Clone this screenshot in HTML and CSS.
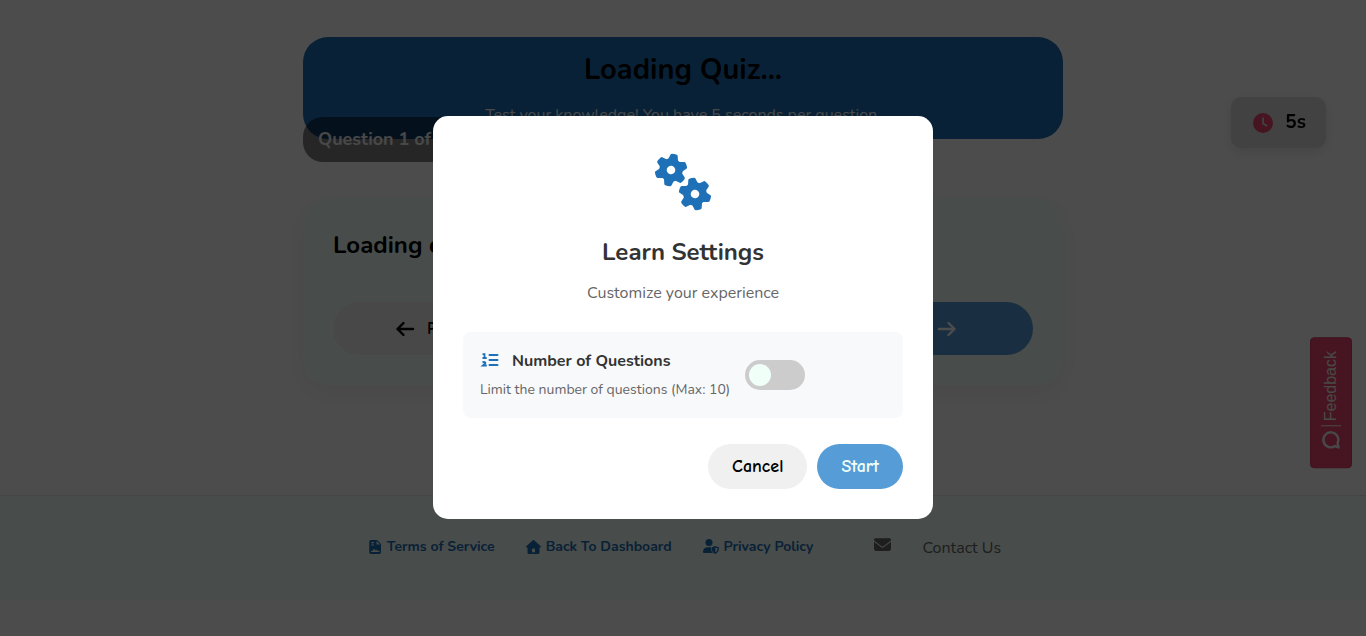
FILE: index.html
```html
<!DOCTYPE html>
<html lang="en">
<head>
    <meta charset="UTF-8">
    <meta name="viewport" content="width=device-width, initial-scale=1.0">
    <title>Quiz</title>
    <link rel="stylesheet" href="styles.css">
</head>
<body>
    <main class="quiz-container">
        <header class="quiz-header">
            <h1>Loading Quiz...</h1>
            <p>Test your knowledge! You have 5 seconds per question.</p>
            <div class="question-count">Question 1 of 10</div>
        </header>

        <section class="quiz-card">
            <h2>Loading question...</h2>
            <div class="quiz-nav">
                <button type="button" class="nav-button">
                    <svg width="20" height="18" viewBox="0 0 20 18" fill="none" stroke="currentColor" stroke-width="2.4" stroke-linecap="round" stroke-linejoin="round"><path d="M18 9H2.5M8.500 3l-6 6 6 6"/></svg>
                    Previous
                </button>
                <button type="button" class="nav-button next-button">
                    Next
                    <svg width="20" height="18" viewBox="0 0 20 18" fill="none" stroke="currentColor" stroke-width="2.4" stroke-linecap="round" stroke-linejoin="round"><path d="M2 9h15.500M11.500 3l6 6-6 6"/></svg>
                </button>
            </div>
        </section>
    </main>

    <div class="timer">
        <svg width="20" height="20" viewBox="0 0 20 20"><circle cx="10" cy="10" r="10" fill="#ef476f"/><path d="M10 5v5.500l3.500 2.300" fill="none" stroke="#dcdcdc" stroke-width="1.700" stroke-linecap="round" stroke-linejoin="round"/></svg>
        <span>5s</span>
    </div>

    <button type="button" class="feedback-button">
        <svg width="20" height="20" viewBox="0 0 20 20" fill="none" stroke="currentColor" stroke-width="2.4"><path d="M14 15.800A7.500 7.500 0 1 1 16.600 12.800L17.500 17.200z" stroke-linejoin="round"/></svg>
        <span>Feedback</span>
    </button>

    <!-- Footer -->
    <footer class="footer">
        <a href="#" class="footer-link">
            <svg width="13" height="14" viewBox="0 0 13 14"><path fill-rule="evenodd" fill="currentColor" d="M2 0h6l4 4v8.200A1.800 1.800 0 0 1 10.200 14H2a1.800 1.800 0 0 1-1.800-1.800V1.800A1.800 1.800 0 0 1 2 0zM2.200 2v1.200H5V2zM2.200 4.400v1.200H5V4.400zM7.500 1v3.500H11zM2 12h8.500v-1.200H8.200L7.500 9.600l-1 1L5 8.500 3.500 11H2z"/></svg>
            Terms of Service
        </a>
        <a href="#" class="footer-link">
            <svg width="15" height="14" viewBox="0 0 15 14"><path fill-rule="evenodd" fill="currentColor" d="M6.900.200a1 1 0 0 1 1.200 0l6.600 6c.600.600.300 1.400-.5 1.400h-.7v4.900c0 .9-.6 1.500-1.500 1.500H3c-.9 0-1.500-.6-1.500-1.500V7.600H.8C0 7.600-.3 6.800.3 6.200zM6 12.200h3V9.500a1 1 0 0 0-1-1H7a1 1 0 0 0-1 1z"/></svg>
            Back To Dashboard
        </a>
        <a href="#" class="footer-link">
            <svg width="16" height="15" viewBox="0 0 16 15" fill="currentColor"><circle cx="6" cy="3.500" r="3.500"/><path d="M0 13c0-3 2-4.800 4.800-4.800h2.400l.8.100c0 2.300.2 4.100 2 5.700H1a1 1 0 0 1-1-1z"/><path fill-rule="evenodd" d="M12.300 7l3.700 1.400c0 3-1 5.500-3.700 6.600-2.700-1.100-3.700-3.600-3.700-6.600zM12.300 8.500v5c1.500-.8 2.300-2.300 2.400-4.200z"/></svg>
            Privacy Policy
        </a>
        <a href="#" class="contact-link">
            <svg width="17" height="17" viewBox="0 0 512 512"><path fill="currentColor" d="M48 64C21.500 64 0 85.500 0 112c0 15.100 7.100 29.300 19.200 38.400L236.800 313.600c11.400 8.500 27 8.500 38.400 0L492.800 150.400c12.100-9.100 19.200-23.300 19.200-38.400c0-26.500-21.500-48-48-48L48 64zM0 176L0 384c0 35.300 28.700 64 64 64l384 0c35.300 0 64-28.700 64-64l0-208L294.400 339.200c-22.800 17.100-54 17.100-76.800 0L0 176z"/></svg>
            <span>Contact Us</span>
        </a>
    </footer>

    <!-- Settings Modal -->
    <div class="modal-overlay">
        <div class="modal" role="dialog" aria-modal="true" aria-labelledby="modal-title">
            <svg class="modal-icon" width="60" height="60" viewBox="0 0 60 60">
                <defs>
                    <path id="tooth" d="M-3.800-9L-2.200-14.600Q0-15 2.200-14.600L3.800-9z" stroke-width="3" stroke-linejoin="round"/>
                    <g id="gear">
                        <circle r="8" fill="none" stroke-width="7.400"/>
                        <use href="#tooth"/>
                        <use href="#tooth" transform="rotate(60)"/>
                        <use href="#tooth" transform="rotate(120)"/>
                        <use href="#tooth" transform="rotate(180)"/>
                        <use href="#tooth" transform="rotate(240)"/>
                        <use href="#tooth" transform="rotate(300)"/>
                    </g>
                </defs>
                <g fill="#1e70b7" stroke="#1e70b7">
                    <use href="#gear" transform="translate(18 18) rotate(12)"/>
                    <use href="#gear" transform="translate(42 42) rotate(-12)"/>
                </g>
            </svg>
            <h2 id="modal-title">Learn Settings</h2>
            <p class="modal-subtitle">Customize your experience</p>

            <div class="setting">
                <div class="setting-info">
                    <label for="limit-questions">
                        <svg width="20" height="18" viewBox="0 0 20 18" fill="none" stroke="#1e70b7" stroke-width="2"><path d="M9.500 3h8M9.500 8h8M9.500 13h8" stroke-linecap="round"/><path d="M2.500 2.200h2V6.500M2.500 6h4.200M2.500 10.500c1.500-1 3.500-.3 2.700.9L2.800 13.500h4" stroke-width="1.800"/></svg>
                        Number of Questions
                    </label>
                    <p>Limit the number of questions (Max: 10)</p>
                </div>
                <input type="checkbox" class="toggle" id="limit-questions">
            </div>

            <div class="modal-actions">
                <button type="button" class="cancel-button">Cancel</button>
                <button type="button" class="start-button">Start</button>
            </div>
        </div>
    </div>
</body>
</html>
```

FILE: styles.css
```css
* {
    box-sizing: border-box;
}
body {
    margin: 0;
    min-height: 100vh;
    background-color: #fff;
    color: #000;
    font-family: Nunito, Lato, sans-serif;
    font-size: 16px;
    line-height: 24px;
}
h1, h2, p {
    margin: 0;
}
button {
    border: none;
    font-family: "Comic Neue", "Comic Sans MS", Nunito, Lato, sans-serif;
    cursor: pointer;
}
a {
    text-decoration: none;
}
svg {
    flex-shrink: 0;
}

/* Quiz */
.quiz-container {
    max-width: 800px;
    margin: 0 auto;
    padding: 37px 20px 0;
}
.quiz-header {
    position: relative;
    padding: 13px 20px 12px;
    border-radius: 25px;
    background-color: #1e70b7;
    text-align: center;
}
.quiz-header h1 {
    margin-bottom: 13px;
    font-size: 29px;
    line-height: 40px;
}
.quiz-header p {
    color: #f0f0f0;
    font-size: 16px;
}
.question-count {
    position: absolute;
    left: 0;
    top: 80px;
    padding: 0 15px;
    border-radius: 20px;
    background-color: rgba(0, 0, 0, 0.5);
    color: #f0f0f0;
    font-size: 18px;
    font-weight: bold;
    line-height: 45px;
}
.quiz-card {
    margin-top: 59px;
    padding: 30px;
    border-radius: 25px;
    background-color: #f0fff8;
    box-shadow: 0 8px 30px rgba(0, 0, 0, 0.06);
}
.quiz-card h2 {
    margin-bottom: 40px;
    font-size: 24px;
    line-height: 34px;
}
.quiz-nav {
    display: grid;
    grid-template-columns: repeat(3, 1fr);
    gap: 20px;
}
.nav-button {
    display: flex;
    justify-content: center;
    align-items: center;
    gap: 12px;
    height: 53px;
    border-radius: 27px;
    background-color: #f0f0f0;
    color: #000;
    font-size: 18px;
    font-weight: bold;
}
.next-button {
    grid-column: 3;
    background-color: #569cd6;
    color: #fff;
}
.timer {
    position: fixed;
    top: 97px;
    right: 40px;
    display: flex;
    align-items: center;
    gap: 12px;
    padding: 12px 20px 12px 22px;
    border-radius: 10px;
    background-color: #dcdcdc;
    box-shadow: 0 4px 12px rgba(0, 0, 0, 0.1);
    font-size: 19px;
    font-weight: bold;
    line-height: 27px;
}
.feedback-button {
    position: fixed;
    right: 14px;
    top: 337px;
    display: flex;
    align-items: center;
    gap: 4px;
    padding: 17px 10px 13px;
    border: 1px solid #d63c62;
    border-radius: 4px;
    background-color: #ef476f;
    color: #f0f0f0;
    font-family: "Liberation Sans", Arial, sans-serif;
    font-size: 16px;
    line-height: 20px;
    writing-mode: vertical-rl;
    transform: rotate(180deg);
}
.feedback-button svg {
    transform: rotate(180deg);
}
.feedback-button span {
    padding-top: 4px;
    border-top: 1px solid #f0f0f0;
}

/* Footer */
.footer {
    display: flex;
    justify-content: center;
    align-items: center;
    gap: 31px;
    height: 105px;
    margin-top: 110px;
    padding-left: 4px;
    border-top: 1px solid #e8e8e8;
    background-color: #f0fff8;
}
.footer-link {
    display: flex;
    align-items: center;
    gap: 5px;
    margin-bottom: 3px;
    color: #1e70b7;
    font-size: 14px;
    font-weight: bold;
}
.contact-link {
    display: flex;
    align-items: center;
    gap: 31px;
    margin-left: 30px;
    color: #666;
}
.contact-link svg {
    margin-bottom: 7px;
}

/* Modal */
.modal-overlay {
    position: fixed;
    inset: 0;
    display: flex;
    justify-content: center;
    align-items: center;
    padding-bottom: 1px;
    background-color: rgba(0, 0, 0, 0.7);
}
.modal {
    width: 90%;
    max-width: 500px;
    padding: 30px;
    border-radius: 15px;
    background-color: #fff;
    text-align: center;
}
.modal-icon {
    display: block;
    margin: 6px auto 22px;
}
.modal h2 {
    margin-bottom: 11px;
    color: #333;
    font-size: 24px;
    line-height: 36px;
}
.modal-subtitle {
    margin-bottom: 27px;
    color: #666;
}
.setting {
    display: flex;
    align-items: center;
    gap: 15px;
    margin-bottom: 26px;
    padding: 17px;
    border-radius: 8px;
    background-color: #f8f9fb;
    text-align: left;
}
.setting-info label {
    display: flex;
    align-items: center;
    gap: 12px;
    margin-bottom: 6px;
    color: #333;
    font-weight: bold;
}
.setting-info p {
    color: #666;
    font-size: 14px;
    line-height: 22px;
}
.toggle {
    appearance: none;
    flex-shrink: 0;
    width: 60px;
    height: 30px;
    margin: 0;
    padding: 4px;
    border-radius: 15px;
    background-color: #ccc;
    cursor: pointer;
}
.toggle::before {
    content: "";
    display: block;
    width: 22px;
    height: 22px;
    border-radius: 50%;
    background-color: #f0fff8;
}
.toggle:checked {
    background-color: #569cd6;
}
.toggle:checked::before {
    margin-left: 30px;
}
.modal-actions {
    display: flex;
    justify-content: flex-end;
    gap: 10px;
}
.modal-actions button {
    padding: 0 24px;
    border-radius: 23px;
    font-size: 18px;
    font-weight: bold;
    line-height: 45px;
}
.cancel-button {
    background-color: #f0f0f0;
    color: #000;
}
.start-button {
    background-color: #569cd6;
    color: #f0fff8;
}
```
